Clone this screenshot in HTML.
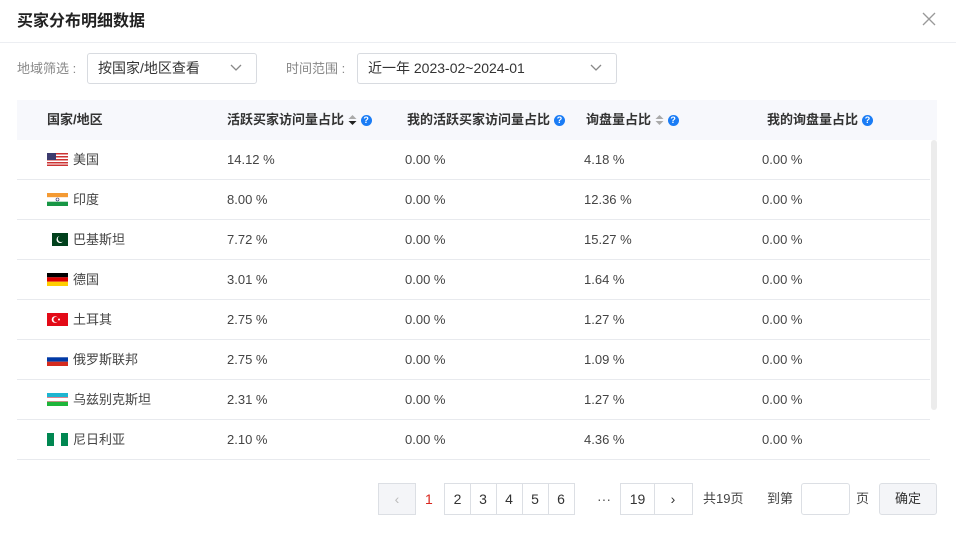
<!DOCTYPE html>
<html><head><meta charset="utf-8"><style>
*{margin:0;padding:0;box-sizing:border-box}
body{width:956px;height:534px;background:#fff;font-family:"Liberation Sans","Noto Sans CJK SC",sans-serif;color:#333;position:relative;overflow:hidden;font-size:13px}
.abs{position:absolute}
.title{left:17px;top:0;line-height:44px;font-size:16px;color:#222;font-weight:bold}
.close{right:20px;top:12px}
.hr{left:0;right:0;top:42px;height:1px;background:#eceef2}
.lbl{color:#888;font-size:13px;line-height:31px;top:53px}
.sel{border:1px solid #d8dbe0;border-radius:3px;height:31px;line-height:29px;padding-left:10px;font-size:14px;color:#333}
.sel svg{position:absolute;right:14px;top:10px}
.head{left:17px;top:100px;width:920px;height:40px;background:#f7f8fc}
.hc{position:absolute;top:0;line-height:40px;font-size:13px;font-weight:bold;color:#333;white-space:nowrap;display:flex;align-items:center}
.q{display:inline-block;width:11px;height:11px;border-radius:50%;background:#1a7cf5;color:#fff;font-size:9px;line-height:11px;text-align:center;margin-left:4px;font-weight:bold}
.row{position:absolute;left:17px;width:913px;height:40px;border-bottom:1px solid #e8eaee}
.c{position:absolute;top:0;height:40px;line-height:40px;font-size:13px;color:#444;white-space:nowrap}
.flag{position:absolute;left:30px;top:13px;width:21px;height:13px}
.pg{position:absolute;top:483px;height:32px;border:1px solid #dcdfe4;text-align:center;line-height:30px;font-size:14px;color:#333}
.t{position:absolute;top:483px;line-height:32px;font-size:13px;color:#444}
</style></head><body>
<div class="abs title">买家分布明细数据</div>
<svg class="abs close" width="14" height="14" viewBox="0 0 14 14"><path d="M1 1L13 13M13 1L1 13" stroke="#999" stroke-width="1.3"/></svg>
<div class="abs hr"></div>
<div class="abs lbl" style="left:17px">地域筛选 :</div>
<div class="abs sel" style="left:87px;top:53px;width:170px">按国家/地区查看<svg width="12" height="8" viewBox="0 0 12 8"><path d="M1 1L6 6L11 1" fill="none" stroke="#888" stroke-width="1.3"/></svg></div>
<div class="abs lbl" style="left:286px">时间范围 :</div>
<div class="abs sel" style="left:357px;top:53px;width:260px">近一年 2023-02~2024-01<svg width="12" height="8" viewBox="0 0 12 8"><path d="M1 1L6 6L11 1" fill="none" stroke="#888" stroke-width="1.3"/></svg></div>

<div class="abs head">
<div class="hc" style="left:30px">国家/地区</div>
<div class="hc" style="left:210px">活跃买家访问量占比&nbsp;<svg width="9" height="12" viewBox="0 0 9 12"><path d="M0.5 5L4.5 1L8.5 5Z" fill="#aaa"/><path d="M0.5 7L4.5 11L8.5 7Z" fill="#222"/></svg><span class="q">?</span></div>
<div class="hc" style="left:390px">我的活跃买家访问量占比<span class="q">?</span></div>
<div class="hc" style="left:569px">询盘量占比&nbsp;<svg width="9" height="12" viewBox="0 0 9 12"><path d="M0.5 5L4.5 1L8.5 5Z" fill="#aaa"/><path d="M0.5 7L4.5 11L8.5 7Z" fill="#aaa"/></svg><span class="q">?</span></div>
<div class="hc" style="left:750px">我的询盘量占比<span class="q">?</span></div>
</div>
<div class="abs" style="left:931px;top:140px;width:6px;height:270px;background:#ececec;border-radius:3px"></div>

<div class="row" style="top:140px"><svg class="flag" viewBox="0 0 21 13"><rect width="21" height="13" fill="#fff"/><g fill="#c33"><rect y="0" width="21" height="1.5"/><rect y="3" width="21" height="1.5"/><rect y="6" width="21" height="1.5"/><rect y="9" width="21" height="1.5"/><rect y="11.5" width="21" height="1.5"/></g><rect width="9" height="7" fill="#3c3b6e"/></svg><div class="c" style="left:56px">美国</div><div class="c" style="left:210px">14.12 %</div><div class="c" style="left:388px">0.00 %</div><div class="c" style="left:567px">4.18 %</div><div class="c" style="left:745px">0.00 %</div></div>
<div class="row" style="top:180px"><svg class="flag" viewBox="0 0 21 13"><rect width="21" height="4.3" fill="#f49a33"/><rect y="4.3" width="21" height="4.4" fill="#fff"/><rect y="8.7" width="21" height="4.3" fill="#189645"/><circle cx="10.5" cy="6.5" r="1.5" fill="none" stroke="#226" stroke-width=".6"/></svg><div class="c" style="left:56px">印度</div><div class="c" style="left:210px">8.00 %</div><div class="c" style="left:388px">0.00 %</div><div class="c" style="left:567px">12.36 %</div><div class="c" style="left:745px">0.00 %</div></div>
<div class="row" style="top:220px"><svg class="flag" viewBox="0 0 21 13"><rect width="21" height="13" fill="#fff"/><rect x="5" width="16" height="13" fill="#01411c"/><circle cx="13" cy="6.5" r="3.5" fill="#fff"/><circle cx="14" cy="5.8" r="3.2" fill="#01411c"/></svg><div class="c" style="left:56px">巴基斯坦</div><div class="c" style="left:210px">7.72 %</div><div class="c" style="left:388px">0.00 %</div><div class="c" style="left:567px">15.27 %</div><div class="c" style="left:745px">0.00 %</div></div>
<div class="row" style="top:260px"><svg class="flag" viewBox="0 0 21 13"><rect width="21" height="4.3" fill="#000"/><rect y="4.3" width="21" height="4.4" fill="#dd0000"/><rect y="8.7" width="21" height="4.3" fill="#ffce00"/></svg><div class="c" style="left:56px">德国</div><div class="c" style="left:210px">3.01 %</div><div class="c" style="left:388px">0.00 %</div><div class="c" style="left:567px">1.64 %</div><div class="c" style="left:745px">0.00 %</div></div>
<div class="row" style="top:300px"><svg class="flag" viewBox="0 0 21 13"><rect width="21" height="13" fill="#e30a17"/><circle cx="8" cy="6.5" r="3.3" fill="#fff"/><circle cx="9" cy="6.5" r="2.6" fill="#e30a17"/><circle cx="12" cy="6.5" r="1" fill="#fff"/></svg><div class="c" style="left:56px">土耳其</div><div class="c" style="left:210px">2.75 %</div><div class="c" style="left:388px">0.00 %</div><div class="c" style="left:567px">1.27 %</div><div class="c" style="left:745px">0.00 %</div></div>
<div class="row" style="top:340px"><svg class="flag" viewBox="0 0 21 13"><rect width="21" height="4.3" fill="#fff" stroke="#eee" stroke-width=".3"/><rect y="4.3" width="21" height="4.4" fill="#0039a6"/><rect y="8.7" width="21" height="4.3" fill="#d52b1e"/></svg><div class="c" style="left:56px">俄罗斯联邦</div><div class="c" style="left:210px">2.75 %</div><div class="c" style="left:388px">0.00 %</div><div class="c" style="left:567px">1.09 %</div><div class="c" style="left:745px">0.00 %</div></div>
<div class="row" style="top:380px"><svg class="flag" viewBox="0 0 21 13"><rect width="21" height="4.2" fill="#1eb5d0"/><rect y="4.2" width="21" height="4.6" fill="#fff"/><rect y="4.2" width="21" height=".5" fill="#ce1126"/><rect y="8.3" width="21" height=".5" fill="#ce1126"/><rect y="8.8" width="21" height="4.2" fill="#1eb53a"/></svg><div class="c" style="left:56px">乌兹别克斯坦</div><div class="c" style="left:210px">2.31 %</div><div class="c" style="left:388px">0.00 %</div><div class="c" style="left:567px">1.27 %</div><div class="c" style="left:745px">0.00 %</div></div>
<div class="row" style="top:420px"><svg class="flag" viewBox="0 0 21 13"><rect width="21" height="13" fill="#fff"/><rect width="7" height="13" fill="#008751"/><rect x="14" width="7" height="13" fill="#008751"/></svg><div class="c" style="left:56px">尼日利亚</div><div class="c" style="left:210px">2.10 %</div><div class="c" style="left:388px">0.00 %</div><div class="c" style="left:567px">4.36 %</div><div class="c" style="left:745px">0.00 %</div></div>

<div class="pg" style="left:378px;width:38px;background:#f4f5f8;color:#bbb">‹</div>
<div class="t" style="left:425px;font-size:14px;color:#d9251d">1</div>
<div class="pg" style="left:444px;width:27px">2</div>
<div class="pg" style="left:470px;width:27px;border-left:none">3</div>
<div class="pg" style="left:496px;width:27px;border-left:none">4</div>
<div class="pg" style="left:522px;width:27px;border-left:none">5</div>
<div class="pg" style="left:548px;width:27px;border-left:none">6</div>
<div class="t" style="left:597px;font-size:14px;color:#555">···</div>
<div class="pg" style="left:620px;width:35px">19</div>
<div class="pg" style="left:654px;width:39px;border-left:none">›</div>
<div class="t" style="left:703px">共19页</div>
<div class="t" style="left:767px">到第</div>
<div class="pg" style="left:801px;width:49px;border-radius:3px"></div>
<div class="t" style="left:856px">页</div>
<div class="pg" style="left:879px;width:58px;background:#f4f5f8;border-radius:3px;font-size:13px">确定</div>
</body></html>
